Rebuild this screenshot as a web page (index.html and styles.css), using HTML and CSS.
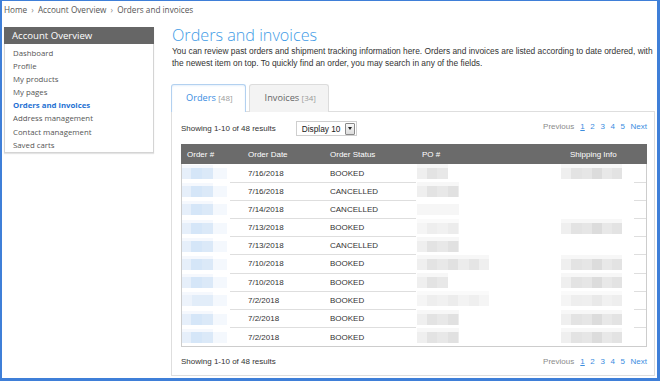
FILE: index.html
```html
<!DOCTYPE html>
<html>
<head>
<meta charset="utf-8">
<link rel="stylesheet" href="styles.css">
</head>
<body>
<div class="frame">
  <div class="crumbs">Home <span class="sep">›</span> Account Overview <span class="sep">›</span> Orders and invoices</div>
  <div class="layout">
    <aside class="side">
      <div class="side-head">Account Overview</div>
      <ul class="side-list">
        <li>Dashboard</li>
        <li>Profile</li>
        <li>My products</li>
        <li>My pages</li>
        <li class="active">Orders and invoices</li>
        <li>Address management</li>
        <li>Contact management</li>
        <li>Saved carts</li>
      </ul>
    </aside>
    <main class="main">
      <h1 class="title">Orders and invoices</h1>
      <p class="intro">You can review past orders and shipment tracking information here. Orders and invoices are listed according to date ordered, with the newest item on top. To quickly find an order, you may search in any of the fields.</p>
      <div class="tabs">
        <div class="tab tab-active">Orders <span class="count">[48]</span></div>
        <div class="tab">Invoices <span class="count">[34]</span></div>
      </div>
      <div class="panel">
        <div class="bar">
          <span class="showing">Showing 1-10 of 48 results</span>
          <div class="select"><span>Display 10</span><span class="select-btn"><span class="caret"></span></span></div>
          <div class="pager"><span class="prev">Previous</span><span class="pg cur">1</span><span class="pg">2</span><span class="pg">3</span><span class="pg">4</span><span class="pg">5</span><span class="pg">Next</span></div>
        </div>
        <div class="table">
          <div class="row head"><div class="c">Order #</div><div class="c">Order Date</div><div class="c">Order Status</div><div class="c">PO #</div><div class="c">Shipping Info</div></div>
          <div class="row"><div class="c c1"><i class="id"></i></div><div class="c c2">7/16/2018</div><div class="c c3">BOOKED</div><div class="c c4"><i class="po po-a"></i></div><div class="c c5"><i class="ship"></i></div></div>
          <div class="row"><div class="c c1"><i class="id"></i></div><div class="c c2">7/16/2018</div><div class="c c3">CANCELLED</div><div class="c c4"><i class="po po-b"></i></div><div class="c c5"></div></div>
          <div class="row"><div class="c c1"><i class="id"></i></div><div class="c c2">7/14/2018</div><div class="c c3">CANCELLED</div><div class="c c4"><i class="po po-faint"></i></div><div class="c c5"></div></div>
          <div class="row"><div class="c c1"><i class="id"></i></div><div class="c c2">7/13/2018</div><div class="c c3">BOOKED</div><div class="c c4"><i class="po po-b po-light"></i></div><div class="c c5"><i class="ship"></i></div></div>
          <div class="row"><div class="c c1"><i class="id"></i></div><div class="c c2">7/13/2018</div><div class="c c3">CANCELLED</div><div class="c c4"><i class="po po-b"></i></div><div class="c c5"></div></div>
          <div class="row"><div class="c c1"><i class="id"></i></div><div class="c c2">7/10/2018</div><div class="c c3">BOOKED</div><div class="c c4"><i class="po po-c"></i></div><div class="c c5"><i class="ship"></i></div></div>
          <div class="row"><div class="c c1"><i class="id"></i></div><div class="c c2">7/10/2018</div><div class="c c3">BOOKED</div><div class="c c4"><i class="po po-a"></i></div><div class="c c5"><i class="ship"></i></div></div>
          <div class="row"><div class="c c1"><i class="id id-light"></i></div><div class="c c2">7/2/2018</div><div class="c c3">BOOKED</div><div class="c c4"><i class="po po-c po-light"></i></div><div class="c c5"><i class="ship ship-light"></i></div></div>
          <div class="row"><div class="c c1"><i class="id"></i></div><div class="c c2">7/2/2018</div><div class="c c3">BOOKED</div><div class="c c4"><i class="po po-b"></i></div><div class="c c5"><i class="ship"></i></div></div>
          <div class="row last"><div class="c c1"><i class="id"></i></div><div class="c c2">7/2/2018</div><div class="c c3">BOOKED</div><div class="c c4"><i class="po po-b"></i></div><div class="c c5"><i class="ship"></i></div></div>
        </div>
        <div class="bar bar-bottom">
          <span class="showing">Showing 1-10 of 48 results</span>
          <div class="pager"><span class="prev">Previous</span><span class="pg cur">1</span><span class="pg">2</span><span class="pg">3</span><span class="pg">4</span><span class="pg">5</span><span class="pg">Next</span></div>
        </div>
      </div>
    </main>
  </div>
</div>
</body>
</html>
```
FILE: styles.css
```css
* { box-sizing: border-box; }
html, body { margin: 0; padding: 0; background: #fff; }
body { width: 660px; height: 381px; overflow: hidden; }
.frame {
  width: 660px; height: 381px;
  border-style: solid; border-color: #3f7fd8;
  border-width: 1px 3px 3px 2px;
  padding: 0 2px 0 2px;
  font-family: "Liberation Sans", Arial, sans-serif;
  color: #333;
}
.crumbs {
  height: 17px; line-height: 17px;
  font-family: "Open Sans", sans-serif; font-size: 8.2px; color: #555;
}
.crumbs .sep { color: #888; margin: 0 2px; }
.layout { display: flex; gap: 17px; margin-top: 9px; }
.side {
  width: 150px; flex: none; align-self: flex-start;
  border: 1px solid #d4d4d4; box-shadow: 0 1px 1px #e4e4e4;
  font-family: "Open Sans", sans-serif;
}
.side-head {
  height: 17px; line-height: 17px; background: #666; color: #fff;
  font-size: 9.6px; padding-left: 8px; margin: -1px -1px 0 -1px;
}
.side-list { list-style: none; margin: 0; padding: 3px 0 0 8px; }
.side-list li { height: 13.1px; line-height: 13.1px; font-size: 7.8px; color: #555; }
.side-list li.active { color: #1f72d3; font-weight: 700; }
.main { flex: 1; min-width: 0; }
.title {
  margin: 0; padding-left: 1px;
  font-family: "Open Sans", sans-serif; font-weight: 300;
  font-size: 16.2px; line-height: 16px; color: #3e9be6;
}
.intro {
  margin: 3px 0 0 0; padding-left: 1px;
  font-size: 8.4px; line-height: 11.7px; color: #333;
}
.tabs { display: flex; gap: 3px; margin-top: 15px; height: 28px; margin-bottom: -1px; position: relative; z-index: 1; }
.tab {
  height: 28px; line-height: 26px; padding: 0 12px 0 15px;
  border: 1px solid #dcdcdc; border-bottom: none; border-radius: 3px 3px 0 0;
  background: #f3f3f3; color: #666; white-space: nowrap;
  font-family: "Open Sans", sans-serif; font-size: 9.2px;
}
.tab-active { background: #fff; color: #3a8ddf; border-color: #b3d1f0; box-shadow: inset 0 1px 2px #e6f0fb; padding: 0 12px 0 14px; }
.count { color: #999; font-size: 8px; }
.panel { border: 1px solid #dedede; padding: 9px 7px 7px 9px; }
.bar { display: flex; align-items: center; height: 15px; font-size: 8px; color: #333; }
.showing { white-space: nowrap; }
.select {
  margin-left: 20px; width: 61px; height: 15px; white-space: nowrap;
  border: 1px solid #cfcfcf; display: flex; align-items: center; justify-content: space-between;
  padding: 0 1px 0 5px; font-size: 8.3px; color: #222;
}
.select-btn {
  width: 10px; height: 12px; border: 1px solid #8a8a8a; border-radius: 1px; flex: none;
  background: linear-gradient(#f8f8f8, #dcdcdc);
  display: flex; align-items: center; justify-content: center;
}
.caret { width: 0; height: 0; border-left: 2.5px solid transparent; border-right: 2.5px solid transparent; border-top: 3px solid #222; }
.pager { margin-left: auto; display: flex; gap: 5.6px; margin-top: -4px; font-size: 8px; color: #3a8ddf; }
.prev { color: #8a8a8a; margin-right: 0.5px; }
.pg.cur { text-decoration: underline; }
.table { margin-top: 8px; border: 1px solid #cdcdcd; border-top: none; }
.row {
  display: grid; grid-template-columns: 60px 82px 92px 148px 1fr;
  height: 18.2px; align-items: stretch;
}
.row.head { height: 20px; background: #6b6b6b; color: #fff; margin: 0 -1px; grid-template-columns: 61px 82px 92px 148px 1fr; }
.c { padding-left: 6px; display: flex; align-items: center; font-size: 8px; white-space: nowrap; }
.c2, .c3 { border-bottom: 1px solid #dedede; }
.c1, .c5 { background: linear-gradient(#dedede, #dedede) right bottom / 12px 1px no-repeat; }
.row.last .c2, .row.last .c3 { border-bottom: none; }
.row.last .c1, .row.last .c5 { background: none; }
.c1 { padding-left: 0; }
.c4 { padding-left: 1px; }
.c5 { padding-left: 0; margin-left: -3px; }
.id {
  display: block; width: 31px; height: 11px;
  background: linear-gradient(90deg, #e6effa 0 9px, #d5e6f8 9px 20px, #dbe9f8 20px 31px);
  box-shadow: 0 -3px 0 #f5f8fd, 14px 0 0 #f4f8fd;
}
.id-light { background: linear-gradient(90deg, #edf3fb 0 10px, #e2edf9 10px 31px); }
.po {
  display: block; height: 11px;
  background: linear-gradient(90deg, #efefef 0 10px, #e3e3e3 10px 20px, #e8e8e8 20px 31px, #e1e1e1 31px 41px, #ececec 41px 52px, #e5e5e5 52px 62px, #efefef 62px);
  box-shadow: 0 -4px 0 #f7f7f7;
}
.po-a { width: 31px; }
.po-b { width: 42px; }
.po-c { width: 72px; }
.po-faint { width: 42px; background: #f6f6f6; box-shadow: none; }
.po-light { opacity: 0.6; }
.ship {
  display: block; width: 61px; height: 11px;
  background: linear-gradient(90deg, #efefef 0 10px, #e3e3e3 10px 21px, #e6e6e6 21px 31px, #dcdcdc 31px 41px, #e8e8e8 41px 51px, #e3e3e3 51px);
  box-shadow: 0 -4px 0 #f7f7f7;
}
.ship-light { opacity: 0.6; }
.bar-bottom { margin-top: 7px; height: 14px; }
.bar-bottom .pager { margin-top: 0; }
```
